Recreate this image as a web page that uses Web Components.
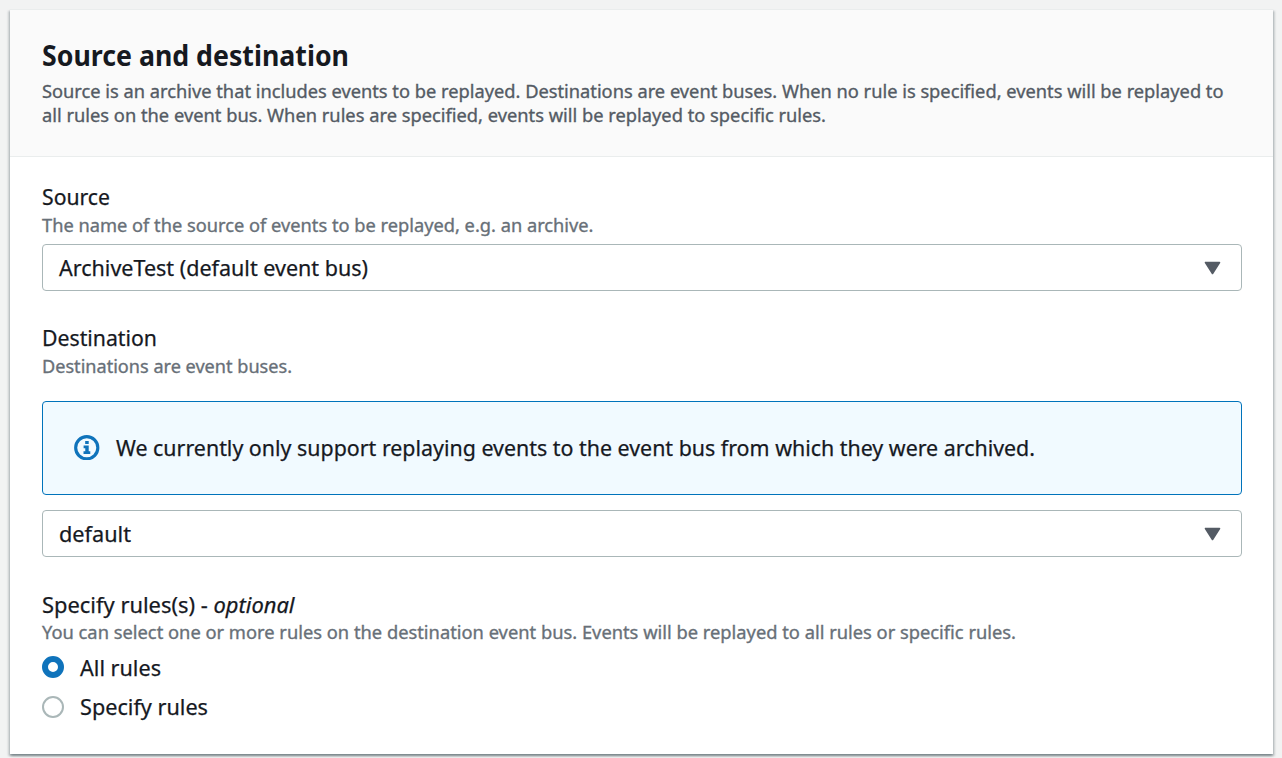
<!DOCTYPE html>
<html lang="en">
<head>
<meta charset="utf-8">
<title>Source and destination</title>
<style>
html,body{margin:0;height:100%;overflow:hidden}
body{background:#f2f3f3;font-family:"Noto Sans","Open Sans",sans-serif;color:#16191f;box-sizing:border-box;padding:9px 9px 0 10px}
.rules{margin-top:1px;--hint-gap:0px;--controls-gap:3px}
</style>
</head>
<body>
<form-panel>
  <fit-line slot="title" w="307" style="--size:28px;--weight:700;--line:36px;--stroke:0">Source and destination</fit-line>
  <fit-line slot="description" w="1181.5" style="--size:18.9px;--line:24px;--stroke:.35px;--rise:0px">Source is an archive that includes events to be replayed. Destinations are event buses. When no rule is specified, events will be replayed to</fit-line>
  <fit-line slot="description" w="784" style="--size:18.9px;--line:24px;--stroke:.35px;--rise:0px">all rules on the event bus. When rules are specified, events will be replayed to specific rules.</fit-line>

  <form-field>
    <fit-line slot="label" w="68">Source</fit-line>
    <fit-line slot="hint" w="551.5">The name of the source of events to be replayed, e.g. an archive.</fit-line>
    <select-box><fit-line w="309">ArchiveTest (default event bus)</fit-line></select-box>
  </form-field>

  <form-field>
    <fit-line slot="label" w="115">Destination</fit-line>
    <fit-line slot="hint" w="250">Destinations are event buses.</fit-line>
    <info-alert><fit-line w="919">We currently only support replaying events to the event bus from which they were archived.</fit-line></info-alert>
    <select-box><fit-line w="72">default</fit-line></select-box>
  </form-field>

  <form-field class="rules">
    <fit-line slot="label" w="252.5">Specify rules(s) - <i>optional</i></fit-line>
    <fit-line slot="hint" w="974">You can select one or more rules on the destination event bus. Events will be replayed to all rules or specific rules.</fit-line>
    <radio-option checked><fit-line w="81">All rules</fit-line></radio-option>
    <radio-option><fit-line w="128">Specify rules</fit-line></radio-option>
  </form-field>
</form-panel>

<script>
const define = (name, html, setup) => {
  const template = document.createElement('template');
  template.innerHTML = html;
  customElements.define(name, class extends HTMLElement {
    connectedCallback() {
      if (this.shadowRoot) return;
      this.attachShadow({mode: 'open'}).append(template.content.cloneNode(true));
      if (setup) setup(this);
    }
  });
};

define('form-panel', `
<style>
:host{display:block;box-sizing:border-box;height:745px;background:#fff;border-top:1px solid #eaeded;
  box-shadow:0 2px 2px 0 rgba(0,28,36,.3),2px 2px 2px 0 rgba(0,28,36,.15),-2px 2px 2px 0 rgba(0,28,36,.15)}
header{box-sizing:border-box;height:147px;padding:28px 32px 0;background:#fafafa;border-bottom:1px solid #eaeded}
.desc{color:#545b64;margin-top:5px}
main{padding:25px 32px 0;display:flex;flex-direction:column;gap:32px}
</style>
<header><slot name="title"></slot><div class="desc"><slot name="description"></slot></div></header>
<main><slot></slot></main>`);

define('form-field', `
<style>
:host{display:block}
.label{--line:30px}
.hint{color:#687078;--size:18.8px;--line:24px;--stroke:.35px;--rise:0px;margin-top:var(--hint-gap,1px)}
.controls{margin-top:var(--controls-gap,7px)}
</style>
<div class="label"><slot name="label"></slot></div>
<div class="hint"><slot name="hint"></slot></div>
<div class="controls"><slot></slot></div>`);

define('select-box', `
<style>
:host{display:flex;box-sizing:border-box;width:1200px;height:47px;padding:0 20px 0 16px;align-items:center;justify-content:space-between;background:#fff;border:1px solid #aab7b8;border-radius:4px}
svg{display:block}
</style>
<slot></slot>
<svg width="17" height="14" viewBox="0 0 17 14"><path d="M1.5 1.5h14l-7 11z" fill="#545b64" stroke="#545b64" stroke-width="1.6" stroke-linejoin="round"/></svg>`);

define('info-alert', `
<style>
:host{display:flex;box-sizing:border-box;width:1200px;height:94px;padding:0 31px;align-items:center;gap:16px;background:#f1faff;border:1px solid #0073bb;border-radius:4px;margin:23px 0 15px}
svg{display:block;margin-top:-1px}
</style>
<svg width="25.5" height="25.5" viewBox="0 0 26 26"><circle cx="13" cy="13" r="11.3" fill="none" stroke="#0f73bb" stroke-width="3.2"/><path d="M11.4 6.2h3.6v3h-3.6zM9.8 10.6H15v6h1.6v2.8H9.7v-2.8h1.8v-3.2H9.8z" fill="#0f73bb"/></svg>
<slot></slot>`);

define('radio-option', `
<style>
:host{display:flex;align-items:center;height:40px;gap:16px}
span{box-sizing:border-box;width:22px;height:22px;border-radius:50%;border:2px solid #aab7b8;background:#fff}
:host([checked]) span{border:6.5px solid #0f73bb}
:host([checked]) ::slotted(*){margin-top:2px}
</style>
<span></span><slot></slot>`);

/* One line of text, condensed or widened to the width given in "w". */
define('fit-line', `
<style>
:host{display:block;white-space:nowrap;font-size:var(--size,22px);line-height:var(--line,30px);height:var(--line,30px);font-weight:var(--weight,400);-webkit-text-stroke:var(--stroke,.25px)}
span{display:inline-block;transform-origin:0 50%}
</style>
<span><slot></slot></span>`, el => {
  const s = el.shadowRoot.querySelector('span');
  const w = +el.getAttribute('w');
  s.style.transform = 'translateY(var(--rise,-1px)) scaleX(' + w / s.getBoundingClientRect().width + ')';
  el.style.width = w + 'px';
});
</script>
</body>
</html>
